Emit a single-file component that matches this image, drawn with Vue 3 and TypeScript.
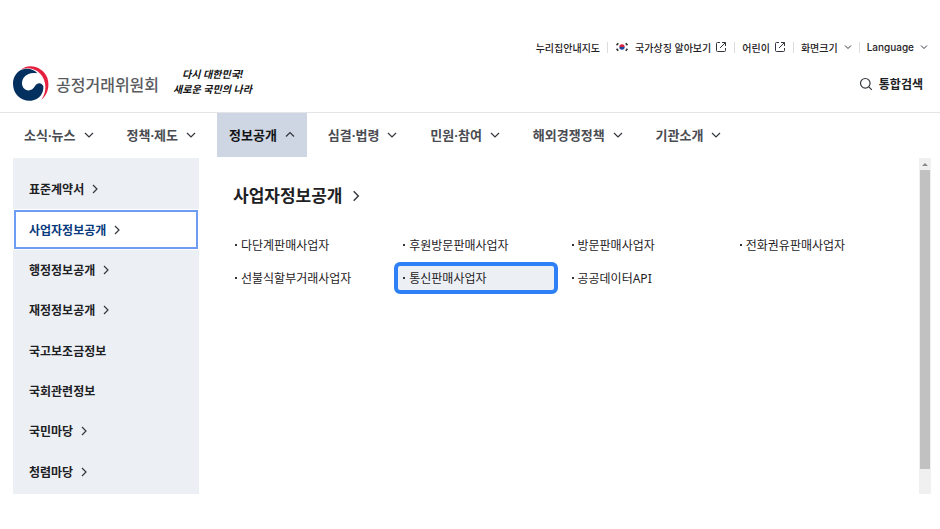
<script setup lang="ts">
interface MenuItem {
  label: string
  expandable: boolean
  active?: boolean
}

const mainMenu: MenuItem[] = [
  { label: '소식·뉴스', expandable: true },
  { label: '정책·제도', expandable: true },
  { label: '정보공개', expandable: true, active: true },
  { label: '심결·법령', expandable: true },
  { label: '민원·참여', expandable: true },
  { label: '해외경쟁정책', expandable: true },
  { label: '기관소개', expandable: true },
]

const sideMenu: MenuItem[] = [
  { label: '표준계약서', expandable: true },
  { label: '사업자정보공개', expandable: true, active: true },
  { label: '행정정보공개', expandable: true },
  { label: '재정정보공개', expandable: true },
  { label: '국고보조금정보', expandable: false },
  { label: '국회관련정보', expandable: false },
  { label: '국민마당', expandable: true },
  { label: '청렴마당', expandable: true },
]

const links: { label: string; marked?: boolean }[] = [
  { label: '다단계판매사업자' },
  { label: '후원방문판매사업자' },
  { label: '방문판매사업자' },
  { label: '전화권유판매사업자' },
  { label: '선불식할부거래사업자' },
  { label: '통신판매사업자', marked: true },
  { label: '공공데이터API' },
]
</script>

<template>
  <div class="page">
    <header class="header">
      <ul class="utility">
        <li><a href="#">누리집안내지도</a></li>
        <li>
          <a href="#">
            <svg class="flag" viewBox="0 0 14 10" aria-hidden="true">
              <path d="M4.3 5a2.7 2.7 0 0 1 5.4 0z" fill="#d4213d" />
              <path d="M4.3 5a2.7 2.7 0 0 0 5.4 0z" fill="#1849a0" />
              <path d="M1.6 3.2 3.2 1.2M10.8 1.2l1.6 2M1.6 6.8l1.6 2M10.8 8.8l1.6-2" stroke="#333" stroke-width="1.7" />
            </svg>
            국가상징 알아보기
            <svg class="ext" viewBox="0 0 12 12" aria-hidden="true">
              <path d="M5 1.5H2.5a1 1 0 0 0-1 1v7a1 1 0 0 0 1 1h7a1 1 0 0 0 1-1V7M7 1.5h3.5V5M10.5 1.5 5 7" />
            </svg>
          </a>
        </li>
        <li>
          <a href="#">
            어린이
            <svg class="ext" viewBox="0 0 12 12" aria-hidden="true">
              <path d="M5 1.5H2.5a1 1 0 0 0-1 1v7a1 1 0 0 0 1 1h7a1 1 0 0 0 1-1V7M7 1.5h3.5V5M10.5 1.5 5 7" />
            </svg>
          </a>
        </li>
        <li>
          <button type="button">
            화면크기
            <svg class="caret" viewBox="0 0 8 8" aria-hidden="true"><path d="m1 2.5 3 3 3-3" /></svg>
          </button>
        </li>
        <li>
          <button type="button" class="language">
            Language
            <svg class="caret" viewBox="0 0 8 8" aria-hidden="true"><path d="m1 2.5 3 3 3-3" /></svg>
          </button>
        </li>
      </ul>

      <div class="brand-row">
        <a href="#" class="brand">
          <svg class="emblem" viewBox="0 0 126 126" aria-hidden="true">
            <path d="M32 20C60-2 100 14 112 44C121 72 110 98 94 110C107 92 110 68 101 48C90 22 60 9 32 20Z" fill="#e8203f" />
            <path d="M29 23C48 13 70 17 82 31C66 27 49 33 41 44C32 58 36 74 47 80C59 86 69 79 75 69C82 58 95 58 100 70C102 90 88 111 64 113C34 116 9 94 9 62C9 46 16 31 29 23Z" fill="#04305f" />
          </svg>
          <span class="brand-name">공정거래위원회</span>
        </a>
        <p class="slogan"><span>다시 대한민국!</span><span>새로운 국민의 나라</span></p>
        <button type="button" class="search">
          <svg viewBox="0 0 14 14" aria-hidden="true"><circle cx="6.3" cy="6.3" r="4.8" /><path d="m9.8 9.8 3 3" /></svg>
          통합검색
        </button>
      </div>
    </header>

    <nav class="main-nav">
      <button
        v-for="item in mainMenu"
        :key="item.label"
        type="button"
        :class="{ active: item.active }"
        :aria-expanded="item.active ? 'true' : 'false'"
      >
        {{ item.label }}
        <svg viewBox="0 0 12 12" aria-hidden="true">
          <path :d="item.active ? 'm2 8.500 4-4 4 4' : 'm2 5 4 4 4-4'" />
        </svg>
      </button>
    </nav>

    <div class="mega">
      <nav class="side">
        <a v-for="item in sideMenu" :key="item.label" href="#" :class="{ active: item.active }">
          {{ item.label }}
          <svg v-if="item.expandable" viewBox="0 0 12 12" aria-hidden="true"><path d="m4 2 4 4-4 4" /></svg>
        </a>
      </nav>

      <main class="content">
        <h2>
          <a href="#">
            사업자정보공개
            <svg viewBox="0 0 12 12" aria-hidden="true"><path d="m4 2 4 4-4 4" /></svg>
          </a>
        </h2>
        <ul class="links">
          <li v-for="link in links" :key="link.label">
            <a href="#" :class="{ marked: link.marked }">{{ link.label }}</a>
          </li>
        </ul>
      </main>

      <div class="scrollbar" aria-hidden="true">
        <svg viewBox="0 0 12 12"><path d="M3 8 6 5l3 3z" /></svg>
        <div class="thumb"></div>
      </div>
    </div>
  </div>
</template>

<style>
body {
  margin: 0;
  background: #fff;
}
</style>

<style scoped>
.page {
  padding-top: 37px;
  font-family: "Noto Sans", "Noto Sans CJK KR", sans-serif;
  color: #1e2124;
}

a {
  color: inherit;
  text-decoration: none;
}

button {
  padding: 0;
  border: 0;
  background: none;
  font: inherit;
  color: inherit;
}

ul,
p,
h2 {
  margin: 0;
  padding: 0;
  list-style: none;
}

svg {
  flex: none;
  fill: none;
  stroke: #33363d;
  stroke-width: 1.2;
}

.emblem,
.flag {
  stroke: none;
}

.header {
  padding-bottom: 1px;
  border-bottom: 1px solid #e3e4e6;
}

.utility {
  display: flex;
  justify-content: flex-end;
  align-items: center;
  height: 20px;
  padding-right: 12px;
  font-size: 10px;
  font-weight: 500;
}

.utility li {
  display: flex;
  align-items: center;
}

.utility li + li::before {
  content: "";
  width: 1px;
  height: 11px;
  margin: 0 7px;
  background: #dcdde0;
}

.utility a {
  display: flex;
  align-items: center;
  gap: 4px;
}

.utility button {
  display: flex;
  align-items: center;
  gap: 6px;
}

.flag {
  width: 14px;
  height: 10px;
  margin-right: 2px;
}

.ext {
  width: 12px;
  height: 12px;
  stroke-width: 1;
}

.caret {
  width: 8px;
  height: 8px;
  stroke-width: 1;
}

.utility .language {
  font-family: Inter, sans-serif;
}

.brand-row {
  display: flex;
  align-items: center;
  height: 54px;
  padding: 0 17px 0 10px;
}

.brand {
  display: flex;
  align-items: center;
  gap: 4px;
}

.emblem {
  width: 42px;
  height: 42px;
}

.brand-name {
  font-size: 16px;
  font-weight: 500;
  color: #5a5b5f;
}

.slogan {
  display: flex;
  flex-direction: column;
  align-items: center;
  margin: 0 0 4px 14px;
  font-size: 10px;
  font-style: italic;
  font-weight: 700;
  line-height: 15px;
  color: #111;
}

.search {
  display: flex;
  align-items: center;
  gap: 6px;
  margin-left: auto;
  font-size: 12px;
  font-weight: 700;
}

.search svg {
  width: 14px;
  height: 14px;
}

.main-nav {
  display: flex;
  gap: 9px;
  padding-left: 12px;
}

.main-nav button {
  display: flex;
  align-items: center;
  gap: 7px;
  box-sizing: border-box;
  height: 44px;
  padding: 0 11px 2px 12px;
  font-size: 13px;
  font-weight: 700;
  color: #4a4c52;
}

.main-nav button.active {
  background: #cdd6e2;
  color: #131416;
}

.main-nav svg {
  width: 12px;
  height: 12px;
}

.mega {
  display: flex;
  min-height: 336px;
  margin: 1px 9px 0 13px;
}

.side {
  display: flex;
  flex-direction: column;
  box-sizing: border-box;
  width: 186px;
  padding: 11px 0 2px;
  background: #ecf0f5;
}

.side a {
  display: flex;
  flex: 1;
  align-items: center;
  gap: 5px;
  padding-left: 16px;
  font-size: 12px;
  font-weight: 700;
}

.side a.active {
  background: #fff;
  outline: 2px solid #6d9cf2;
  outline-offset: -3px;
  color: #083a7c;
}

.side svg {
  width: 12px;
  height: 12px;
}

.content {
  flex: 1;
  padding: 23px 25px 0 27px;
}

h2 {
  padding-left: 7px;
  font-size: 17px;
  font-weight: 700;
  line-height: 30px;
}

h2 a {
  display: inline-flex;
  align-items: center;
  gap: 7px;
}

h2 svg {
  width: 14px;
  height: 14px;
}

.links {
  display: grid;
  grid-template-columns: repeat(4, 1fr);
  gap: 1px 5px;
  margin-top: 18px;
}

.links a {
  display: flex;
  align-items: center;
  box-sizing: border-box;
  height: 32px;
  padding-left: 5px;
  border: 4px solid transparent;
  border-radius: 6px;
  font-size: 12px;
}

.links a::before {
  content: "";
  width: 2px;
  height: 2px;
  margin-right: 4px;
  background: #33363d;
}

.links a.marked {
  border-color: #2f80f7;
  background: #ecf0f5;
}

.scrollbar {
  width: 12px;
  background: #f0f0f0;
}

.scrollbar svg {
  display: block;
  width: 12px;
  height: 12px;
  fill: #8a8a8a;
  stroke: none;
}

.thumb {
  height: 299px;
  margin: 0 1px;
  background: #c1c1c1;
}
</style>
